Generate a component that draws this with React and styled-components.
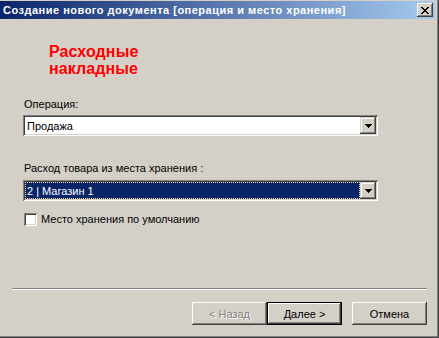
import React from 'react';
import styled, { createGlobalStyle } from 'styled-components';

const GlobalStyle = createGlobalStyle`
    html, body {
        margin: 0;
        padding: 0;
        background: #D4D0C8;
    }
    body {
        font-family: "Liberation Sans", Arial, sans-serif;
        font-size: 11px;
        color: #000;
    }
`;

const Window = styled.div`
    width: 439px;
    height: 338px;
    box-sizing: border-box;
    padding: 1px 2px 2px 0;
    background: #D4D0C8;
    box-shadow: inset -1px -1px #404040, inset -2px -2px #808080;
    display: flex;
    flex-direction: column;
`;

const TitleBar = styled.div`
    height: 18px;
    margin-right: 2px;
    display: flex;
    align-items: center;
    justify-content: space-between;
    padding-left: 3px;
    background: linear-gradient(to right, #0A246A, #A6CAF0);
`;

const TitleText = styled.span`
    color: #fff;
    font-weight: bold;
    font-size: 11px;
    white-space: nowrap;
    letter-spacing: 0.5px;
`;

const CloseButton = styled.div`
    width: 16px;
    height: 14px;
    margin-right: 2px;
    box-sizing: border-box;
    background: #D4D0C8;
    display: flex;
    align-items: center;
    justify-content: center;
    box-shadow: inset -1px -1px #404040, inset 1px 1px #fff, inset -2px -2px #808080;
`;

const Body = styled.div`
    flex: 1;
    display: flex;
    flex-direction: column;
`;

const Heading = styled.div`
    margin: 24px 0 0 49px;
    color: #FF0000;
    font-weight: bold;
    font-size: 16px;
    line-height: 17px;
    letter-spacing: 0.1px;
`;

const Field = styled.div`
    margin-left: 23px;
    width: 355px;
    margin-top: ${props => props.top}px;
`;

const Label = styled.div`
    line-height: 13px;
    padding-left: 1px;
    white-space: nowrap;
`;

const Combo = styled.div`
    margin-top: ${props => props.gap}px;
    height: 21px;
    box-sizing: border-box;
    background: #fff;
    display: flex;
    padding: 2px;
    box-shadow: inset 1px 1px #808080, inset -1px -1px #fff, inset 2px 2px #404040, inset -2px -2px #D4D0C8;
`;

const ComboValue = styled.div`
    flex: 1;
    display: flex;
    align-items: center;
    padding-left: 2px;
    white-space: nowrap;
    color: ${props => props.selected ? '#fff' : '#000'};
    background: ${props => props.selected ? '#0A246A' : 'transparent'};
    outline: ${props => props.selected ? '1px dotted #F5DB95' : 'none'};
    outline-offset: -1px;
`;

const DropButton = styled.div`
    width: 16px;
    height: 17px;
    box-sizing: border-box;
    background: #D4D0C8;
    display: flex;
    align-items: center;
    justify-content: center;
    box-shadow: inset -1px -1px #404040, inset 1px 1px #D4D0C8, inset -2px -2px #808080, inset 2px 2px #fff;
`;

const CheckRow = styled.label`
    margin: 12px 0 0 24px;
    display: flex;
    align-items: center;
    gap: 4px;
    line-height: 13px;
`;

const CheckBox = styled.span`
    width: 13px;
    height: 13px;
    box-sizing: border-box;
    background: #fff;
    box-shadow: inset 1px 1px #808080, inset -1px -1px #fff, inset 2px 2px #404040, inset -2px -2px #D4D0C8;
`;

const Footer = styled.div`
    padding: 0 10px 11px 12px;
`;

const Separator = styled.div`
    height: 1px;
    background: #808080;
    border-bottom: 1px solid #fff;
`;

const ButtonRow = styled.div`
    margin-top: 12px;
    display: flex;
    justify-content: flex-end;
`;

const Button = styled.div`
    width: 75px;
    height: 23px;
    box-sizing: border-box;
    display: flex;
    align-items: center;
    justify-content: center;
    margin-left: ${props => props.gap || 0}px;
    background: #D4D0C8;
    color: ${props => props.disabled ? '#808080' : '#000'};
    text-shadow: ${props => props.disabled ? '1px 1px #fff' : 'none'};
    border: ${props => props.isDefault ? '1px solid #000' : 'none'};
    box-shadow: ${props => props.isDefault
        ? 'inset -1px -1px #404040, inset 1px 1px #fff, inset -2px -2px #808080'
        : 'inset -1px -1px #404040, inset 1px 1px #fff, inset -2px -2px #808080, inset 2px 2px #D4D0C8'};
`;

const CloseGlyph = () =>
    <svg width="8" height="7" viewBox="0 0 8 7" shapeRendering="crispEdges">
        <path fill="#000" d="M0 0h2v1h-2zM6 0h2v1h-2zM1 1h2v1h-2zM5 1h2v1h-2zM2 2h4v1h-4zM3 3h2v1h-2zM2 4h4v1h-4zM1 5h2v1h-2zM5 5h2v1h-2zM0 6h2v1h-2zM6 6h2v1h-2z"/>
    </svg>;

const Arrow = () =>
    <svg width="7" height="4" viewBox="0 0 7 4" shapeRendering="crispEdges">
        <path fill="#000" d="M0 0h7v1h-7zM1 1h5v1h-5zM2 2h3v1h-3zM3 3h1v1h-1z"/>
    </svg>;

const App = () =>
    <Window>
        <GlobalStyle/>
        <TitleBar>
            <TitleText>Создание нового документа [операция и место хранения]</TitleText>
            <CloseButton><CloseGlyph/></CloseButton>
        </TitleBar>
        <Body>
            <Heading>Расходные<br/>накладные</Heading>
            <Field top={21}>
                <Label>Операция:</Label>
                <Combo gap={4}>
                    <ComboValue>Продажа</ComboValue>
                    <DropButton><Arrow/></DropButton>
                </Combo>
            </Field>
            <Field top={26}>
                <Label>Расход товара из места хранения :</Label>
                <Combo gap={5}>
                    <ComboValue selected>2 | Магазин 1</ComboValue>
                    <DropButton><Arrow/></DropButton>
                </Combo>
            </Field>
            <CheckRow>
                <CheckBox/>
                Место хранения по умолчанию
            </CheckRow>
        </Body>
        <Footer>
            <Separator/>
            <ButtonRow>
                <Button disabled>&lt; Назад</Button>
                <Button isDefault>Далее &gt;</Button>
                <Button gap={10}>Отмена</Button>
            </ButtonRow>
        </Footer>
    </Window>;

export default App
